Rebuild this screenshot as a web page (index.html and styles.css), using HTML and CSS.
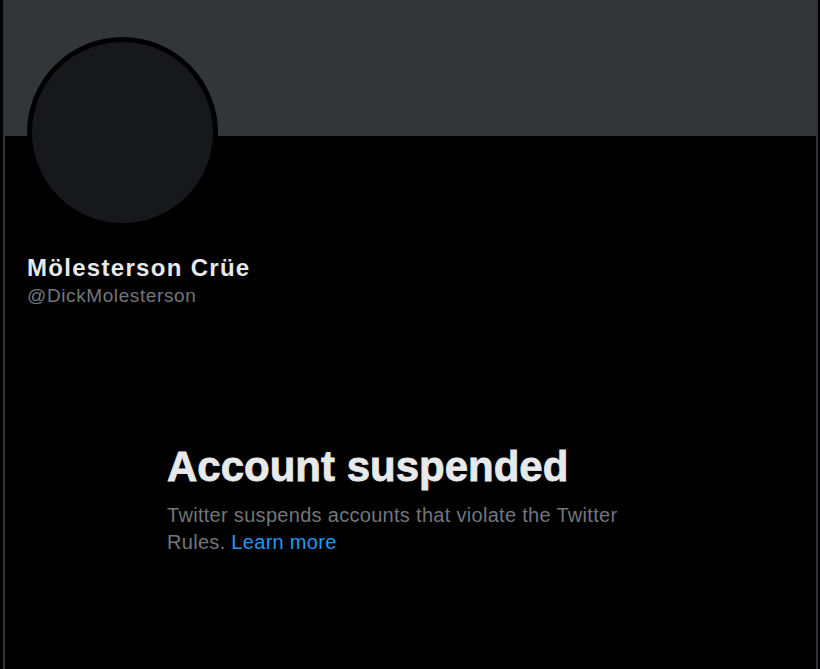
FILE: index.html
```html
<!DOCTYPE html>
<html lang="en">
<head>
    <meta charset="UTF-8">
    <meta name="viewport" content="width=device-width, initial-scale=1.0">
    <title>Mölesterson Crüe (@DickMolesterson)</title>
    <link rel="stylesheet" href="styles.css">
</head>
<body>
    <div class="page">
        <div class="header">
            <div class="banner"></div>
            <div class="avatar"></div> <!-- empty profile picture -->
        </div>

        <div class="profile">
            <div class="name">Mölesterson Crüe</div>
            <div class="handle">@DickMolesterson</div>
        </div>

        <!-- Suspended notice -->
        <div class="notice">
            <h2 class="notice-title">Account suspended</h2>
            <p class="notice-text">Twitter suspends accounts that violate the Twitter Rules. <a href="#" class="link">Learn more</a></p>
        </div>
    </div>
</body>
</html>
```

FILE: styles.css
```css
body {
    margin: 0;
    background-color: #000;
    font-family: "Liberation Sans", Arial, sans-serif;
    color: #e7e9ea;
}

.page {
    margin-left: 3px;
    width: 815px;
    min-height: 669px;
    box-sizing: border-box;
    border-left: 2px solid #2f3336;
    border-right: 2px solid #2f3336;
}

.header {
    position: relative;
}

.banner {
    height: 136px;
    background-color: #333639;
}

.avatar {
    position: absolute;
    left: 22px;
    top: 37px;
    width: 181px;
    height: 181px;
    border: 5px solid #000;
    border-radius: 50%;
    background-color: #16181c;
}

.profile {
    padding: 118px 0 0 22px;
}

.name {
    font-size: 24px;
    font-weight: bold;
    line-height: 28px;
    letter-spacing: 1.3px;
}

.handle {
    margin-top: 3px;
    font-size: 19px;
    line-height: 22px;
    letter-spacing: 0.6px;
    color: #71767b;
}

.notice {
    padding: 136px 0 0 162px;
    width: 470px;
}

.notice-title {
    margin: 0;
    font-size: 42px;
    font-weight: bold;
    line-height: 48px;
    -webkit-text-stroke: 0.8px #e7e9ea;
}

.notice-text {
    margin: 11px 0 0;
    font-size: 20px;
    line-height: 27px;
    letter-spacing: 0.3px;
    color: #71767b;
}

.link {
    color: #1d9bf0;
    text-decoration: none;
}
```
